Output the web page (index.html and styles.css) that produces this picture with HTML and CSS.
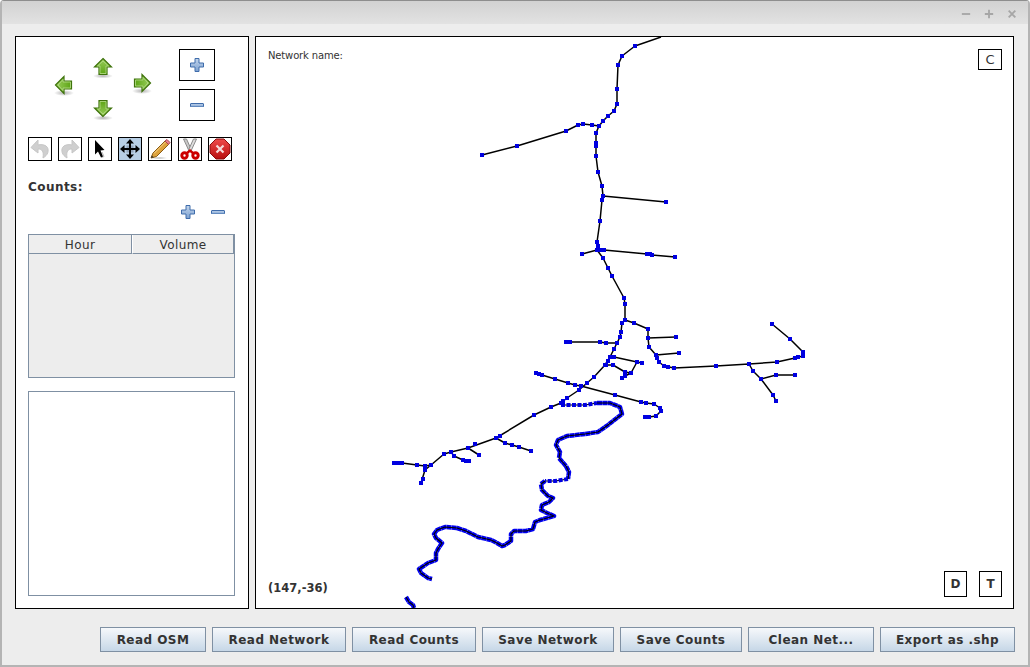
FILE: index.html
```html
<!DOCTYPE html>
<html lang="en">
<head>
<meta charset="utf-8">
<title>Network editor</title>
<link rel="stylesheet" href="styles.css">
</head>
<body>
<svg class="defs" aria-hidden="true">
  <defs>
    <linearGradient id="green" x1="0" y1="0" x2="0" y2="1"><stop offset="0" stop-color="#9ccf5e"/><stop offset="1" stop-color="#5aa312"/></linearGradient>
    <linearGradient id="bluefill" x1="0" y1="0" x2="0" y2="1"><stop offset="0" stop-color="#c2d5ec"/><stop offset="1" stop-color="#7da1d0"/></linearGradient>
    <radialGradient id="shade"><stop offset="0" stop-color="#000" stop-opacity=".3"/><stop offset="1" stop-color="#000" stop-opacity="0"/></radialGradient>
    <linearGradient id="redfill" x1="0" y1="0" x2="0" y2="1"><stop offset="0" stop-color="#ef4a4a"/><stop offset="1" stop-color="#b80f0f"/></linearGradient>
    <g id="arrow">
      <path d="M12 3.500 20.500 12H16V19.500H8V12H3.500Z" fill="url(#green)" stroke="#3f730c" stroke-width="1.200"/>
      <path d="M12 6 17.500 11H15V18.500H9V11H6.500Z" fill="none" stroke="#b6dc8a" stroke-width=".8"/>
    </g>
    <symbol id="plus" viewBox="0 0 14 14">
      <path d="M5 .5H9V5H13.500V9H9V13.500H5V9H.5V5H5Z" fill="url(#bluefill)" stroke="#3f6cab"/>
    </symbol>
    <symbol id="minus" viewBox="0 0 14 4">
      <rect x=".5" y=".5" width="13" height="3.500" rx=".5" fill="url(#bluefill)" stroke="#3f6cab"/>
    </symbol>
    <symbol id="undo" viewBox="0 0 22 22">
      <path d="M9 2 2 9.500 9 15V11C13 11 15 13 14 20 19 17 20 13 18.500 9.500 17 7 13 6 9 7Z" fill="#cfcfcf" stroke="#c6c6c6"/>
    </symbol>
  </defs>
</svg>
<div class="window">
  <header class="titlebar">
    <svg class="winicon" viewBox="0 0 12 12"><path d="M1 6H11" class="wstroke"/></svg>
    <svg class="winicon" viewBox="0 0 12 12"><path d="M1 6H11M6 1V11" class="wstroke"/></svg>
    <svg class="winicon" viewBox="0 0 12 12"><path d="M2 2 10 10M10 2 2 10" class="wstroke"/></svg>
  </header>
  <main class="main">
    <aside class="panel side">
      <div class="toprow">
        <div class="nav">
          <div class="navcol navleft">
            <svg class="arrow" viewBox="0 0 24 24"><ellipse cx="12" cy="20" rx="10" ry="3" fill="url(#shade)"/><use href="#arrow" transform="rotate(-90 12 12)"/></svg>
          </div>
          <div class="navcol navmid">
            <svg class="arrow" viewBox="0 0 24 24"><ellipse cx="12" cy="21" rx="10" ry="2.500" fill="url(#shade)"/><use href="#arrow"/></svg>
            <svg class="arrow" viewBox="0 0 24 24"><ellipse cx="12" cy="22" rx="10" ry="2.500" fill="url(#shade)"/><use href="#arrow" transform="rotate(180 12 12)"/></svg>
          </div>
          <div class="navcol navright">
            <svg class="arrow" viewBox="0 0 24 24"><ellipse cx="12" cy="20" rx="10" ry="3" fill="url(#shade)"/><use href="#arrow" transform="rotate(90 12 12)"/></svg>
          </div>
        </div>
        <div class="zoomcol">
          <button class="zoombtn"><svg class="ic14"><use href="#plus"/></svg></button>
          <button class="zoombtn"><svg class="icminus"><use href="#minus"/></svg></button>
        </div>
      </div>
      <div class="tools">
        <button class="tool"><svg class="ic22"><use href="#undo"/></svg></button>
        <button class="tool"><svg class="ic22 flip"><use href="#undo"/></svg></button>
        <button class="tool">
          <svg class="ic22" viewBox="0 0 22 22"><path d="M12.500 19.500 15 18.500 13 14" fill="none" stroke="#bbb"/><path d="M6 2 6 16.500 9 13.500 12 19.500 14 18.500 11.500 12.500 15.500 12Z" fill="#000"/></svg>
        </button>
        <button class="tool active">
          <svg class="ic22" viewBox="0 0 22 22"><rect x="7.500" y="7.500" width="7" height="7" fill="#93a6bb"/><path d="M11 1 15 5.500H12V10H16.500V7L21 11 16.500 15V12H12V16.500H15L11 21 7 16.500H10V12H5.500V15L1 11 5.500 7V10H10V5.500H7Z" fill="#000"/></svg>
        </button>
        <button class="tool">
          <svg class="ic22" viewBox="0 0 22 22"><ellipse cx="10" cy="20" rx="9" ry="1.200" fill="url(#shade)"/><path d="M2 20 4 15 16 3 19.500 6.500 7.500 18.500Z" fill="#dda23c" stroke="#8a5a12"/><path d="M5 15.500 16.500 4" stroke="#f7d58c" fill="none"/><path d="M16 3 18 1.500 21 4.500 19.500 6.500Z" fill="#e8808c" stroke="#a8424e"/><path d="M2 20 2.800 17.500 4.800 19.200Z" fill="#333"/></svg>
        </button>
        <button class="tool">
          <svg class="ic22" viewBox="0 0 22 22"><path d="M4.500 1 7.500 1 12.500 12 10.500 14Z" fill="#c9c9c9" stroke="#8b8b8b"/><path d="M17.500 1 14.500 1 9.500 12 11.500 14Z" fill="#dedede" stroke="#8b8b8b"/><circle cx="5.500" cy="17.500" r="2.700" fill="none" stroke="#cc0000" stroke-width="3"/><circle cx="16.500" cy="17.500" r="2.700" fill="none" stroke="#cc0000" stroke-width="3"/><path d="M7.500 15.500 11 12.500 14.500 15.500" fill="none" stroke="#cc0000" stroke-width="2.400"/></svg>
        </button>
        <button class="tool">
          <svg class="ic22" viewBox="0 0 22 22"><path d="M7 1H15L21 7V15L15 21H7L1 15V7Z" fill="url(#redfill)" stroke="#8a0c0c"/><path d="M7.500 7.500 14.500 14.500M14.500 7.500 7.500 14.500" stroke="#f6dcdc" stroke-width="2.200"/></svg>
        </button>
      </div>
      <div class="countslabel">Counts:</div>
      <div class="countsactions">
        <svg class="ic14"><use href="#plus"/></svg>
        <svg class="icminus"><use href="#minus"/></svg>
      </div>
      <div class="table">
        <div class="thead"><div class="th hour">Hour</div><div class="th volume">Volume</div></div>
        <div class="tbody"></div>
      </div>
      <div class="textbox"></div>
    </aside>
    <section class="panel canvas">
      <svg class="network" viewBox="256 37 758 571">
        <path class="road" d="M661 37 635 46 622 56 618 65 617 89 617 104 614 111 608 116 603 121 599 126 596 133 596 156 598 172 602 186 603 196 602 200 600 221 597 242 597 250 603 258 608 268 612 276 624 298 625 304 625 320 622 323 621 332 620 337 617 343 614 349 610 357 605 365 594 377 587 383 579 390 567 398 561 403 551 407 534 415 496 438 468 448 451 452 444 454 431 465 425 470 421 483"/>
        <path class="road" d="M482 155 517 146 566 131 578 125 583 124 592 125 599 126M603 196 666 202M582 254 597 250 604 250 647 254 652 255 675 257"/>
        <path class="road" d="M625 320 634 323 648 329 648 338 649 347 656 355 659 362 664 366 674 368 716 366 749 364 777 362 795 358 803 356 803 352 790 339 772 324M648 338 676 337M656 355 679 353M749 364 753 371 761 379 773 395 776 401M761 379 776 375 795 375"/>
        <path class="road" d="M566 342 600 342 606 343 617 343M614 357 637 362 642 363M637 362 631 373 625 376 622 378M606 365 613 365 625 372 631 373"/>
        <path class="road" d="M536 373 542 375 555 379 568 383 575 385 581 386 615 395 641 402 646 403 654 404 660 408 661 411 656 416 649 417 645 417"/>
        <path class="road" d="M394 463 402 463 417 465 425 466 431 465M496 438 505 443 512 445 519 447 531 451M468 448 479 455M451 452 454 456 463 460 469 461"/>
        <path class="nodes" d="M635 46h0M622 56h0M618 65h0M617 89h0M617 104h0M614 111h0M608 116h0M603 121h0M599 126h0M596 133h0M596 143h0M596 146h0M596 156h0M598 172h0M602 186h0M603 196h0M602 200h0M600 221h0M597 242h0M598 246h0M597 250h0M600 250h0M604 250h0M603 258h0M608 268h0M612 276h0M624 298h0M625 304h0M625 320h0M622 323h0M621 332h0M620 337h0M617 343h0M614 349h0M610 357h0M608 361h0M605 365h0M594 377h0M587 383h0M579 390h0M567 398h0M561 403h0M563 401h0M551 407h0M534 415h0M500 436h0M496 438h0M475 444h0M468 448h0M451 452h0M444 454h0M431 465h0M425 470h0M421 483h0M423 479h0"/>
        <path class="nodes" d="M482 155h0M517 146h0M566 131h0M578 125h0M583 124h0M592 125h0M666 202h0M582 254h0M647 254h0M650 254h0M652 255h0M675 257h0M634 323h0M648 329h0M648 338h0M649 347h0M656 355h0M657 358h0M659 362h0M664 366h0M668 367h0M674 368h0M716 366h0M749 364h0M777 362h0M795 358h0M798 357h0M803 356h0M803 352h0M790 339h0M772 324h0M676 337h0M679 353h0M753 371h0M761 379h0M773 395h0M776 401h0M776 375h0M795 375h0M566 342h0M570 342h0M600 342h0M606 343h0M614 357h0M637 362h0M642 363h0M631 373h0M625 376h0M622 378h0M606 365h0M613 365h0M625 372h0"/>
        <path class="nodes" d="M536 373h0M539 374h0M542 375h0M555 379h0M568 383h0M575 385h0M581 386h0M615 395h0M641 402h0M646 403h0M654 404h0M660 408h0M661 411h0M656 416h0M649 417h0M645 417h0M394 463h0M398 463h0M402 463h0M417 465h0M425 466h0M431 465h0M505 443h0M512 445h0M519 447h0M531 451h0M479 455h0M454 456h0M463 460h0M466 461h0M469 461h0"/>
        <path class="riverline" d="M561 405 585 405 597 403"/>
        <path class="riverline" d="M568 479 555 481 545 481"/>
        <path class="riverspaced" d="M561 405 585 405 597 403"/>
        <path class="riverspaced" d="M568 479 555 481 545 481"/>
        <path class="riverdots" d="M597 403 610 403 620 407 622 414 608 425 598 432 585 434 567 436 558 440 556 445 560 452 559 458 566 466 569 472 568 479"/>
        <path class="riverdots" d="M545 481 541 484 542 490 548 496 553 498 549 502 542 505 541 510 547 513 554 516 540 520 535 522 533 529 526 531 514 531 511 534 511 541 505 545 502 546 497 543 491 540 478 537 466 531 457 528 445 527 437 530 434 534 436 538 442 543 438 549 436 553 436 560 428 563 419 569 421 573 428 578 432 579"/>
        <path class="riverdots" d="M406 597 409 602 413 605 414 608"/>
        <path class="riverline" d="M597 403 610 403 620 407 622 414 608 425 598 432 585 434 567 436 558 440 556 445 560 452 559 458 566 466 569 472 568 479"/>
        <path class="riverline" d="M545 481 541 484 542 490 548 496 553 498 549 502 542 505 541 510 547 513 554 516 540 520 535 522 533 529 526 531 514 531 511 534 511 541 505 545 502 546 497 543 491 540 478 537 466 531 457 528 445 527 437 530 434 534 436 538 442 543 438 549 436 553 436 560 428 563 419 569 421 573 428 578 432 579"/>
        <path class="riverline" d="M406 597 409 602 413 605 414 608"/>
      </svg>
      <div class="netname">Network name:</div>
      <div class="coords">(147,-36)</div>
      <button class="mapbtn btnc">C</button>
      <button class="mapbtn btnd">D</button>
      <button class="mapbtn btnt">T</button>
    </section>
  </main>
  <footer class="footer">
    <button class="action w106">Read OSM</button>
    <button class="action w134">Read Network</button>
    <button class="action w124">Read Counts</button>
    <button class="action w132">Save Network</button>
    <button class="action w122">Save Counts</button>
    <button class="action w126">Clean Net...</button>
    <button class="action w135">Export as .shp</button>
  </footer>
</div>
</body>
</html>
```
FILE: styles.css
```css
* { box-sizing: border-box; }
html, body { margin: 0; padding: 0; }
body { width: 1030px; height: 667px; overflow: hidden; background: #fff; font-family: "DejaVu Sans", sans-serif; color: #333; }
button { font-family: inherit; color: inherit; padding: 0; margin: 0; cursor: default; }
.defs { position: absolute; width: 0; height: 0; }

.window { width: 1030px; height: 667px; background: #ededed; display: flex; flex-direction: column; border: solid #b4b4b4; border-width: 1px 2px 2px 2px; border-top-color: #8e8e8e; border-radius: 4px 4px 0 0; }
.titlebar { height: 23px; flex: none; display: flex; justify-content: flex-end; align-items: center; gap: 13px; padding: 2px 11px 0 0; background: linear-gradient(#d2d2d2, #e2e2e2); }
.winicon { width: 10px; height: 10px; }
.wstroke { fill: none; stroke: #a6a6a6; stroke-width: 2.200; }

.main { display: flex; gap: 6px; padding: 12px 14px 0 13px; height: 585px; flex: none; }
.panel { background: #fff; border: 1px solid #000; }
.side { width: 234px; flex: none; padding: 12px 13px 12px 12px; display: flex; flex-direction: column; }
.canvas { flex: 1; position: relative; overflow: hidden; }

.toprow { display: flex; height: 72px; flex: none; }
.nav { width: 151px; flex: none; display: flex; padding-left: 24px; gap: 15px; }
.navcol { display: flex; flex-direction: column; width: 24px; }
.navleft { padding-top: 24px; }
.navmid { padding-top: 6px; gap: 17px; }
.navright { padding-top: 22px; }
.arrow { width: 24px; height: 24px; flex: none; overflow: visible; }
.zoomcol { display: flex; flex-direction: column; gap: 8px; }
.zoombtn { width: 36px; height: 32px; background: #fff; border: 1px solid #000; display: flex; align-items: center; justify-content: center; }
.ic14 { width: 14px; height: 14px; display: block; }
.icminus { width: 14px; height: 4px; display: block; }
.ic22 { width: 22px; height: 22px; display: block; }
.flip { transform: scaleX(-1); }

.tools { display: flex; gap: 6px; margin-top: 16px; flex: none; }
.tool { width: 24px; height: 24px; background: #fff; border: 1px solid #000; display: flex; align-items: center; justify-content: center; }
.tool.active { background: #b8cfe5; }

.countslabel { margin-top: 18px; height: 16px; font-size: 12px; line-height: 16px; font-weight: bold; letter-spacing: .45px; flex: none; }
.countsactions { margin-top: 9px; height: 16px; flex: none; display: flex; justify-content: flex-end; align-items: center; gap: 16px; padding-right: 10px; }

.table { margin-top: 14px; height: 144px; flex: none; display: flex; flex-direction: column; border: 1px solid #7f90a3; background: #ededed; }
.thead { display: flex; height: 19px; flex: none; border-right: 1px solid #7f90a3; }
.th { font-size: 12px; line-height: 20px; letter-spacing: .4px; text-align: center; border-bottom: 1px solid #7f90a3; background: #eeeeee; }
.hour { width: 103px; border-right: 1px solid #7f90a3; }
.volume { flex: 1; border-left: 1px solid #fff; }
.tbody { flex: 1; }
.textbox { margin-top: 13px; flex: 1; background: #fff; border: 1px solid #7f90a3; }

.network { display: block; width: 758px; height: 571px; }
.road { fill: none; stroke: #000; stroke-width: 1.500; stroke-linejoin: round; }
.nodes { fill: none; stroke: #0000e0; stroke-width: 4; stroke-linecap: square; shape-rendering: crispEdges; }
.riverdots { fill: none; stroke: #0000f0; stroke-width: 4.500; stroke-dasharray: 5 .3; stroke-linejoin: round; }
.riverspaced { fill: none; stroke: #0000e0; stroke-width: 4; stroke-dasharray: 4 1.500; }
.riverline { fill: none; stroke: #000; stroke-width: 1.100; stroke-linejoin: round; }

.netname { position: absolute; left: 12px; top: 12px; font-size: 10px; letter-spacing: -.15px; line-height: 13px; }
.coords { position: absolute; left: 12px; top: 543px; font-size: 11.500px; line-height: 16px; font-weight: bold; }
.mapbtn { position: absolute; background: #fff; border: 1px solid #000; font-size: 12px; font-weight: bold; text-align: center; }
.btnc { left: 722px; top: 12px; width: 24px; height: 21px; font-size: 13px; font-weight: normal; }
.btnd { left: 688px; top: 534px; width: 23px; height: 26px; }
.btnt { left: 723px; top: 534px; width: 23px; height: 26px; }

.footer { display: flex; justify-content: flex-end; gap: 6px; padding: 18px 13px 0 0; }
.action { height: 25px; border: 1px solid #7f90a3; background: linear-gradient(#f6f8fb, #c6d7e7); font-size: 12px; font-weight: bold; letter-spacing: .45px; }
.w106 { width: 106px; }
.w134 { width: 134px; }
.w124 { width: 124px; }
.w132 { width: 132px; }
.w122 { width: 122px; }
.w126 { width: 126px; }
.w135 { width: 135px; }
```
